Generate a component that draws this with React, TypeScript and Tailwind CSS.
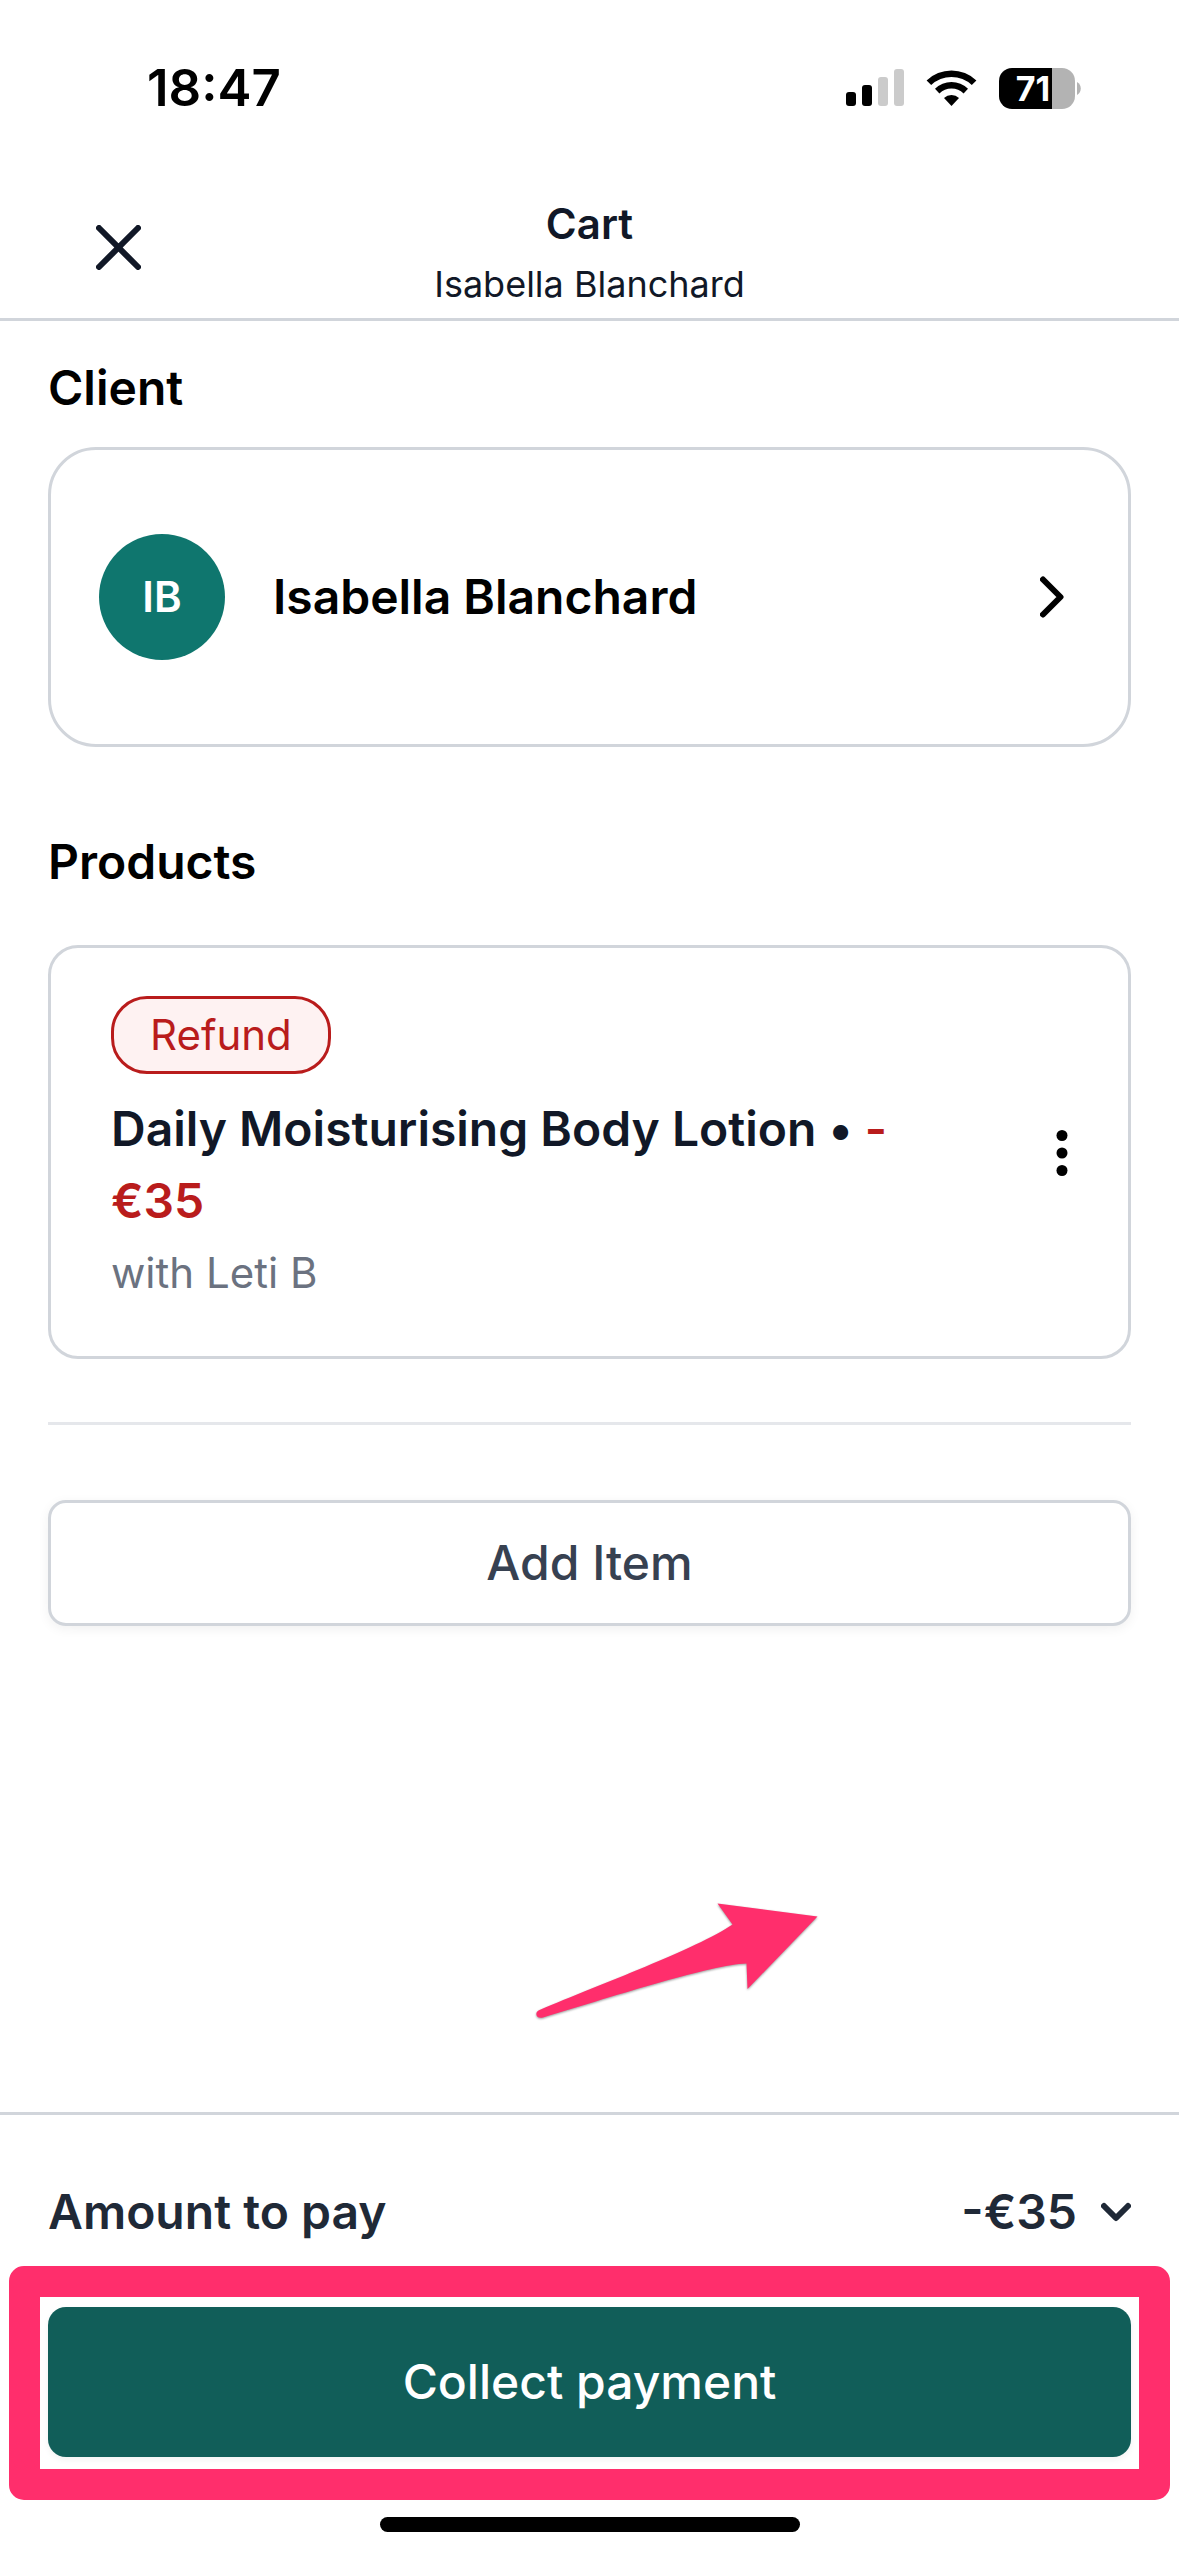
interface CartItemProps {
  name: string
  price: string
  staff: string
  badge?: string
}

function StatusBar() {
  return (
    <div className="flex h-[176px] items-center justify-between pr-[98px] pl-[147px]">
      <span className="text-[51px] leading-[60px] font-semibold text-black">18:47</span>
      <div className="flex items-center">
        <svg className="mr-[22px] h-[42px] w-[58px]" viewBox="0 0 58 42" aria-hidden="true">
          <rect x="0" y="25" width="10" height="14" rx="3" fill="#000" />
          <rect x="16" y="18" width="10" height="21" rx="3" fill="#000" />
          <rect x="32" y="10" width="10" height="29" rx="3" fill="#cbcbcb" />
          <rect x="48" y="2" width="10" height="37" rx="3" fill="#cbcbcb" />
        </svg>
        <svg className="mr-[22px] h-[42px] w-[51px]" viewBox="0 0 51 42" aria-hidden="true">
          <path d="M0.6 13.4 A36 36 0 0 1 50.4 13.4 L45.8 18 A29.5 29.5 0 0 0 5.2 18 Z" fill="#000" />
          <path d="M9 21.8 A23.6 23.6 0 0 1 42 21.8 L37.6 26.4 A17.4 17.4 0 0 0 13.4 26.4 Z" fill="#000" />
          <path d="M18 31 A10.8 10.8 0 0 1 33 31 L25.5 39 Z" fill="#000" />
        </svg>
        <div className="flex h-[41px] w-[76px] items-center justify-center overflow-hidden rounded-[13px] bg-[linear-gradient(to_right,#000_53px,#b3b3b3_53px)] pr-2 text-[34px] leading-[41px] font-bold text-white">
          71
        </div>
        <svg className="ml-[2px] h-[13px] w-[4px]" viewBox="0 0 4 13" aria-hidden="true">
          <path d="M0 0 C5 2.5 5 10.5 0 13 Z" fill="#b3b3b3" />
        </svg>
      </div>
    </div>
  )
}

function Header({ title, subtitle }: { title: string; subtitle: string }) {
  return (
    <header className="grid grid-cols-[1fr_auto_1fr] border-b-[3px] border-[#d1d5db] pt-[18px] pb-1 text-[#111827]">
      <button type="button" aria-label="Close" className="ml-[96px] flex h-[106px] items-center justify-self-start">
        <svg className="size-[45px]" viewBox="0 0 45 45" fill="none" stroke="currentColor" strokeWidth="6" strokeLinecap="round">
          <path d="M3 3L42 42M42 3L3 42" />
        </svg>
      </button>
      <div className="text-center">
        <h1 className="text-[42px] leading-[60px] font-semibold">{title}</h1>
        <p className="text-[36px] leading-[60px]">{subtitle}</p>
      </div>
    </header>
  )
}

function ClientCard({ name, initials }: { name: string; initials: string }) {
  return (
    <button
      type="button"
      className="flex h-[300px] w-full items-center gap-12 rounded-[48px] border-[3px] border-[#d1d5db] px-12 text-left text-black"
    >
      <span className="flex size-[126px] items-center justify-center rounded-full bg-[#0f766e] text-[42px] leading-[60px] font-semibold text-white">
        {initials}
      </span>
      <span className="flex-1 text-[48px] leading-[72px] font-semibold">{name}</span>
      <svg className="mr-4 h-[42px] w-[24px]" viewBox="0 0 24 42" fill="none" stroke="currentColor" strokeWidth="6" strokeLinecap="round" strokeLinejoin="round">
        <path d="M3 3.5L20.5 21L3 38.5" />
      </svg>
    </button>
  )
}

function CartItem({ name, price, staff, badge }: CartItemProps) {
  return (
    <article className="flex items-center justify-between rounded-[30px] border-[3px] border-[#d1d5db] px-[60px] pt-12 pb-[47px]">
      <div className="max-w-[840px]">
        {badge && (
          <span className="mb-[19px] flex w-fit rounded-[36px] border-[3px] border-[#b91c1c] bg-[#fef2f2] px-9 text-[42px] leading-[72px] text-[#b91c1c]">
            {badge}
          </span>
        )}
        <h3 className="text-[48px] leading-[72px] font-semibold text-[#111827]">
          {name} • <span className="text-[#b91c1c]">{price}</span>
        </h3>
        <p className="text-[42px] leading-[72px] text-[#6b7280]">{staff}</p>
      </div>
      <button type="button" aria-label="Item options" className="text-black">
        <svg className="h-[48px] w-[12px]" viewBox="0 0 12 48" fill="currentColor">
          <circle cx="6" cy="6.5" r="5.5" />
          <circle cx="6" cy="24" r="5.5" />
          <circle cx="6" cy="41.5" r="5.5" />
        </svg>
      </button>
    </article>
  )
}

function PointerArrow() {
  return (
    <svg
      className="pointer-events-none absolute bottom-[86px] left-[531px] h-[125px] w-[300px] drop-shadow-[0_1px_1px_rgba(0,0,0,0.4)]"
      viewBox="0 0 300 125"
      fill="#ff2e6c"
      aria-hidden="true"
    >
      <path d="M8.5 109 C70 83 165 48 201.5 23.5 L186.5 2.5 L286.5 15.5 L216.5 88 L215.5 62.5 C180 64 90 93 12 116.5 C5 118.5 3 111 8.5 109 Z" />
    </svg>
  )
}

function Footer({ total }: { total: string }) {
  return (
    <footer className="border-t-[3px] border-[#d1d5db] px-12 pt-[61px] pb-6">
      <div className="flex items-center justify-between text-[48px] leading-[72px] font-semibold text-[#1f2937]">
        <span>Amount to pay</span>
        <button type="button" className="flex items-center gap-6">
          {total}
          <svg className="h-[20px] w-[30px]" viewBox="0 0 30 20" fill="none" stroke="currentColor" strokeWidth="6" strokeLinecap="round" strokeLinejoin="round">
            <path d="M3 4L15 16L27 4" />
          </svg>
        </button>
      </div>
      <div className="relative mt-[59px]">
        <button
          type="button"
          className="h-[150px] w-full rounded-[18px] bg-[#115e59] text-[48px] leading-[72px] font-medium text-white shadow-[0_3px_6px_rgba(0,0,0,0.05)]"
        >
          Collect payment
        </button>
        <div className="pointer-events-none absolute -inset-x-[39px] -top-[41px] -bottom-[43px] rounded-[15px] border-[31px] border-[#ff2e6c]" />
      </div>
      <div className="mx-auto mt-[60px] h-[15px] w-[420px] rounded-full bg-black" />
    </footer>
  )
}

export default function App() {
  return (
    <div className="flex min-h-screen flex-col bg-white font-['Inter',sans-serif]">
      <StatusBar />
      <Header title="Cart" subtitle="Isabella Blanchard" />
      <main className="relative flex-1 px-12 pt-[31px]">
        <h2 className="mb-[23px] text-[48px] leading-[72px] font-semibold text-black">Client</h2>
        <ClientCard name="Isabella Blanchard" initials="IB" />

        <h2 className="mt-[79px] mb-[47px] text-[48px] leading-[72px] font-semibold text-black">Products</h2>
        <CartItem name="Daily Moisturising Body Lotion" price="-€35" staff="with Leti B" badge="Refund" />

        <hr className="mt-[63px] mb-[75px] border-t-[3px] border-[#e5e7eb]" />
        <button
          type="button"
          className="h-[126px] w-full rounded-[18px] border-[3px] border-[#d1d5db] text-[48px] leading-[72px] font-medium text-[#374151] shadow-[0_3px_12px_rgba(0,0,0,0.06)]"
        >
          Add Item
        </button>
        <PointerArrow />
      </main>
      <Footer total="-€35" />
    </div>
  )
}
